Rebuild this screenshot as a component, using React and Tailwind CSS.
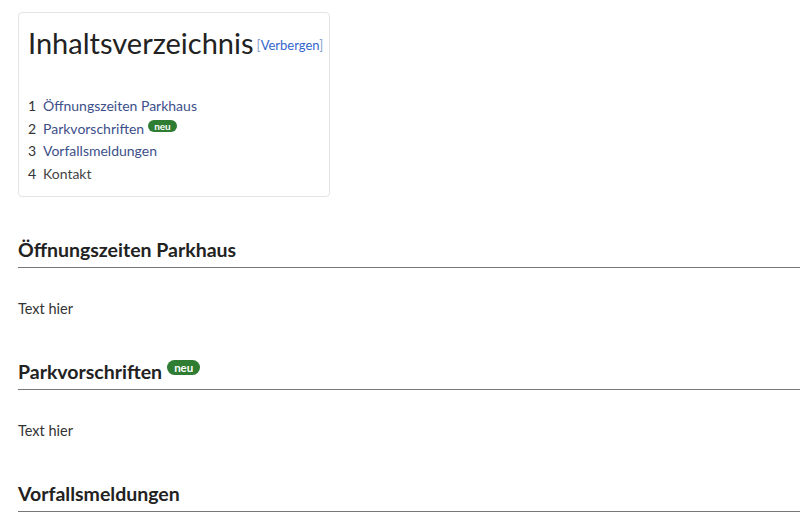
import React from 'react';

const Badge = ({ big }) => (
  <span
    className={`inline-block align-top rounded-full bg-[#2e7d32] text-white font-bold leading-none ${
      big ? 'text-[11.5px] px-[7px] py-[2px] mt-[2px] ml-[5px]' : 'text-[10px] px-[6px] py-[1px] mt-[2px] ml-[4px]'
    }`}
  >
    neu
  </span>
);

const tocItems = [
  { n: 1, label: 'Öffnungszeiten Parkhaus' },
  { n: 2, label: 'Parkvorschriften', neu: true },
  { n: 3, label: 'Vorfallsmeldungen' },
  { n: 4, label: 'Kontakt', plain: true },
];

const Section = ({ title, neu, text }) => (
  <section>
    <h2 className="text-[19.5px] font-bold text-[#222] leading-[28px] pb-[3px] border-b border-[#777]">
      {title}
      {neu && <Badge big />}
    </h2>
    {text && <p className="text-[14.5px] text-[#333] mt-[32px] mb-[40px] leading-[18px]">{text}</p>}
  </section>
);

export default function App() {
  return (
    <div className="min-h-[520px] bg-white pt-[12px] pl-[18px] overflow-hidden" style={{ fontFamily: "Lato, 'Noto Sans', sans-serif" }}>
      {/* Inhaltsverzeichnis */}
      <div className="w-[312px] border border-[#e4e4e4] rounded-[4px] px-[9px] pt-[12px] pb-[10px]">
        <div className="flex items-end">
          <h1 className="text-[29px] leading-[36px] text-[#222] font-normal">Inhaltsverzeichnis</h1>
          <span className="text-[13px] ml-[3px] mb-[6px] text-[#3366cc]">
            <span className="text-[#8aa0d0]">[</span>Verbergen<span className="text-[#8aa0d0]">]</span>
          </span>
        </div>
        <ul className="mt-[34px] text-[14px] leading-[22.67px]">
          {tocItems.map((it) => (
            <li key={it.n} className="flex items-start">
              <span className="text-[#333] w-[15px]">{it.n}</span>
              <span className={it.plain ? 'text-[#444]' : 'text-[#3d4f8a]'}>{it.label}</span>
              {it.neu && <Badge />}
            </li>
          ))}
        </ul>
      </div>

      <div className="mt-[39px]">
        <Section title="Öffnungszeiten Parkhaus" text="Text hier" />
        <Section title="Parkvorschriften" neu text="Text hier" />
        <Section title="Vorfallsmeldungen" />
      </div>
    </div>
  );
}
